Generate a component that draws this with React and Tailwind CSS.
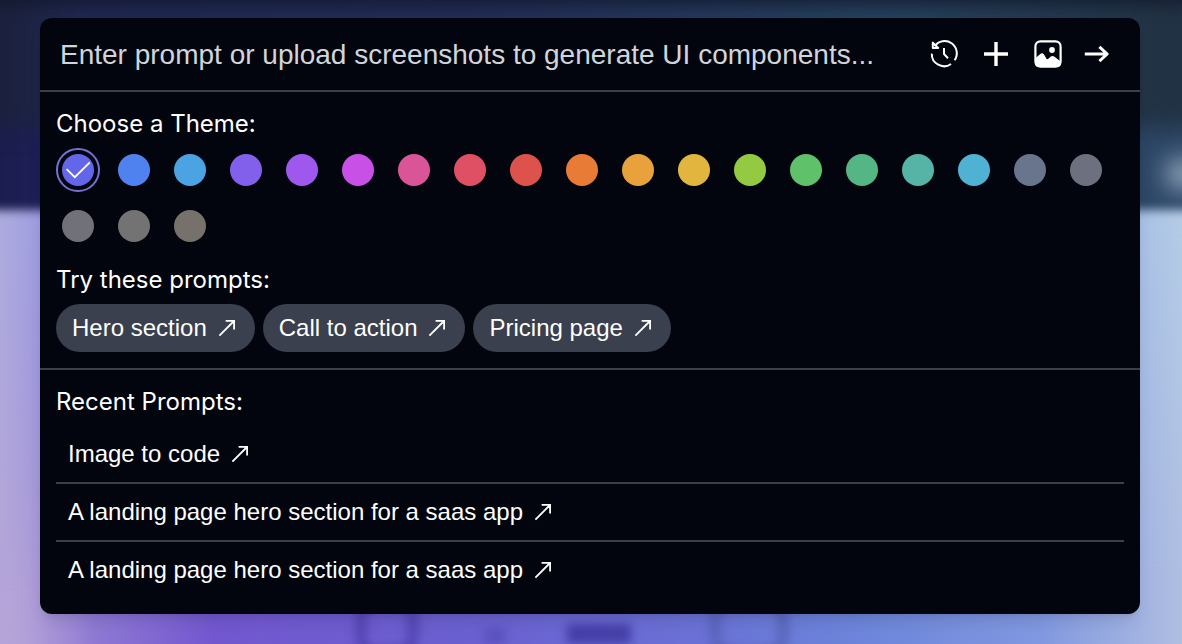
import React, { useState } from 'react';

const themes = [
  { name: 'indigo', color: 'bg-[#6466e9]' },
  { name: 'blue', color: 'bg-[#4f82ee]' },
  { name: 'sky', color: 'bg-[#4ba3e3]' },
  { name: 'violet', color: 'bg-[#8360ec]' },
  { name: 'purple', color: 'bg-[#9f58ee]' },
  { name: 'fuchsia', color: 'bg-[#c950e7]' },
  { name: 'pink', color: 'bg-[#da5597]' },
  { name: 'rose', color: 'bg-[#e05064]' },
  { name: 'red', color: 'bg-[#dd524c]' },
  { name: 'orange', color: 'bg-[#e87b35]' },
  { name: 'amber', color: 'bg-[#e9a23b]' },
  { name: 'yellow', color: 'bg-[#e2b53e]' },
  { name: 'lime', color: 'bg-[#94ca42]' },
  { name: 'green', color: 'bg-[#5fc26a]' },
  { name: 'emerald', color: 'bg-[#55b685]' },
  { name: 'teal', color: 'bg-[#55b4a6]' },
  { name: 'cyan', color: 'bg-[#50b2d3]' },
  { name: 'slate', color: 'bg-[#69758c]' },
  { name: 'gray', color: 'bg-[#6d717f]' },
  { name: 'zinc', color: 'bg-[#717179]' },
  { name: 'neutral', color: 'bg-[#737373]' },
  { name: 'stone', color: 'bg-[#77716c]' },
];

const samplePrompts = ['Hero section', 'Call to action', 'Pricing page'];

const recentPrompts = [
  'Image to code',
  'A landing page hero section for a saas app',
  'A landing page hero section for a saas app',
];

const ArrowUpRight = () => (
  <svg className="size-6 shrink-0" viewBox="0 0 24 24" fill="none" stroke="currentColor" strokeWidth="1.8" aria-hidden="true">
    <path d="M4.4 19.6 19 5M10.6 4.9h8.5v8.5" />
  </svg>
);

const HistoryIcon = () => (
  <svg className="size-8" viewBox="0 0 32 32" fill="none" stroke="currentColor" strokeWidth="2" aria-hidden="true">
    <path d="M6.6 8.2A12.2 12.2 0 1 1 26.6 22.2" />
    <path d="M3.8 15.6A12.2 12.2 0 0 0 23 26" />
    <path d="M4.8 4.6v5.3h5.4zM16 10v6l4 4.2" strokeLinejoin="round" />
  </svg>
);

const PlusIcon = () => (
  <svg className="size-8" viewBox="0 0 32 32" fill="none" stroke="currentColor" strokeWidth="3.4" aria-hidden="true">
    <path d="M16 4v24M4 16h24" />
  </svg>
);

const ImageIcon = () => (
  <svg className="size-8" viewBox="0 0 32 32" fill="none" aria-hidden="true">
    <rect x="3.4" y="3.4" width="25.2" height="25.2" rx="5" stroke="currentColor" strokeWidth="2.2" />
    <circle cx="20" cy="12" r="2.9" fill="currentColor" />
    <path
      fill="currentColor"
      d="M3 20.5 8.6 15.8Q10.4 14.4 12 16.4L14.6 21Q15.4 21.6 16.4 20.8L18.8 18.6Q20.6 17.2 22.2 18.6L29 23.8V25a4 4 0 0 1-4 4H7a4 4 0 0 1-4-4z"
    />
  </svg>
);

const ArrowRight = () => (
  <svg className="size-8" viewBox="0 0 32 32" fill="none" stroke="currentColor" strokeWidth="3" strokeLinejoin="round" aria-hidden="true">
    <path d="M.8 16H23M15.4 8.8 23.2 16l-7.8 7.2" />
  </svg>
);

// Blurred page that shows behind the prompt panel
const Backdrop = () => (
  <div className="absolute inset-0 -z-10 overflow-hidden bg-[linear-gradient(90deg,#b4a8d8_0%,#9a86d6_4%,#7257cf_18%,#6a60d0_40%,#6a72d6_60%,#6c84da_72%,#8098e0_88%,#b0bee2_100%)]">
    <div className="absolute inset-0 bg-[linear-gradient(180deg,transparent_30%,#b5a4d8_100%)] [mask-image:linear-gradient(90deg,#000_0%,transparent_8%)]" />
    <div className="absolute inset-x-0 top-0 h-full bg-[linear-gradient(90deg,#adabde_0%,#9b9ae0_4%,#a0b8e4_94%,#b4cce6_100%)] [mask-image:linear-gradient(180deg,#000_34%,transparent_92%)]" />
    <div className="absolute -inset-x-4 -top-4 h-[226px] bg-[linear-gradient(90deg,#1b1b4c_0%,#1e2058_6%,#203058_50%,#28405f_90%,#304c6c_100%)] blur-[5px]" />
    <div className="absolute -inset-x-4 -top-4 h-36 bg-[linear-gradient(90deg,#1a2038_0%,#1f2750_8%,#212c55_40%,#24405c_75%,#203040_100%)] blur-md" />
    <div className="absolute -inset-x-4 -top-4 h-5 bg-[#101528]/80 blur-sm" />
    <div className="absolute -right-5 top-40 h-7 w-9 rounded-full bg-[#9fb0c4] blur-md" />
    <div className="absolute bottom-0 left-[30%] h-16 w-16 translate-y-4 rounded-3xl border-12 border-[#4f41ae]/80 blur-[5px]" />
    <div className="absolute bottom-0 left-[41%] h-4 w-5 bg-[#5046b0]/60 blur-[5px]" />
    <div className="absolute bottom-0 left-[48%] h-5 w-16 bg-[#413ba4]/90 blur-[5px]" />
    <div className="absolute bottom-0 left-[60%] h-16 w-20 translate-y-4 rounded-3xl border-12 border-[#5360b4]/70 blur-[5px]" />
  </div>
);

const HeaderButton = ({ label, children }) => (
  <button type="button" aria-label={label} className="shrink-0 text-white">
    {children}
  </button>
);

const SectionTitle = ({ id, children }) => (
  <h2 id={id} className="mb-2 font-[Inter,sans-serif] text-2xl leading-8 font-normal">
    {children}
  </h2>
);

const App = () => {
  const [prompt, setPrompt] = useState('');
  const [theme, setTheme] = useState('indigo');

  return (
    <div className="relative isolate min-h-screen pt-[18px] pr-[42px] pb-[30px] pl-10 font-['Liberation_Sans',Arial,sans-serif] text-white">
      <Backdrop />

      <main className="rounded-xl bg-[#02050e] shadow-lg">
        {/* Prompt bar */}
        <header className="flex h-[74px] items-center gap-5 border-b-2 border-[#3a3f4c] pr-6 pl-5">
          <input
            type="text"
            aria-label="Prompt"
            value={prompt}
            onChange={(e) => setPrompt(e.target.value)}
            placeholder="Enter prompt or upload screenshots to generate UI components..."
            className="h-full min-w-0 flex-1 bg-transparent pt-0.5 text-[28px] placeholder:text-[#d1d5db] focus:outline-none"
          />
          <HeaderButton label="History"><HistoryIcon /></HeaderButton>
          <HeaderButton label="New prompt"><PlusIcon /></HeaderButton>
          <HeaderButton label="Upload screenshot"><ImageIcon /></HeaderButton>
          <HeaderButton label="Generate"><ArrowRight /></HeaderButton>
        </header>

        <section className="border-b-2 border-[#3a3f4c] p-4">
          {/* Themes */}
          <SectionTitle id="theme-title">Choose a Theme:</SectionTitle>
          <div role="radiogroup" aria-labelledby="theme-title" className="mb-4 flex flex-wrap gap-3">
            {themes.map((t) => (
              <label
                key={t.name}
                className="relative flex size-11 items-center justify-center rounded-full border-2 border-transparent has-checked:border-[#7472d4]"
              >
                <input
                  type="radio"
                  name="theme"
                  aria-label={t.name}
                  checked={theme === t.name}
                  onChange={() => setTheme(t.name)}
                  className={`size-8 appearance-none rounded-full ${t.color}`}
                />
                {theme === t.name && (
                  <svg className="pointer-events-none absolute size-8" viewBox="0 0 32 32" fill="none" stroke="currentColor" strokeWidth="1.8" aria-hidden="true">
                    <path d="m4.6 15.2 8.2 8L27.8 8.4" />
                  </svg>
                )}
              </label>
            ))}
          </div>

          {/* Sample prompts */}
          <SectionTitle>Try these prompts:</SectionTitle>
          <div className="flex flex-wrap gap-2">
            {samplePrompts.map((p) => (
              <button
                key={p}
                type="button"
                onClick={() => setPrompt(p)}
                className="flex h-12 items-center gap-2 rounded-full bg-[#3a404e] px-4 text-2xl leading-8"
              >
                {p}
                <ArrowUpRight />
              </button>
            ))}
          </div>
        </section>

        {/* Recent prompts */}
        <section className="p-4">
          <SectionTitle>Recent Prompts:</SectionTitle>
          <ul className="divide-y-2 divide-[#3a3f4c]">
            {recentPrompts.map((p, i) => (
              <li key={i}>
                <button
                  type="button"
                  onClick={() => setPrompt(p)}
                  className="flex h-14 w-full items-center gap-2 px-3 text-left text-2xl leading-8"
                >
                  {p}
                  <ArrowUpRight />
                </button>
              </li>
            ))}
          </ul>
        </section>
      </main>
    </div>
  );
};

export default App;
